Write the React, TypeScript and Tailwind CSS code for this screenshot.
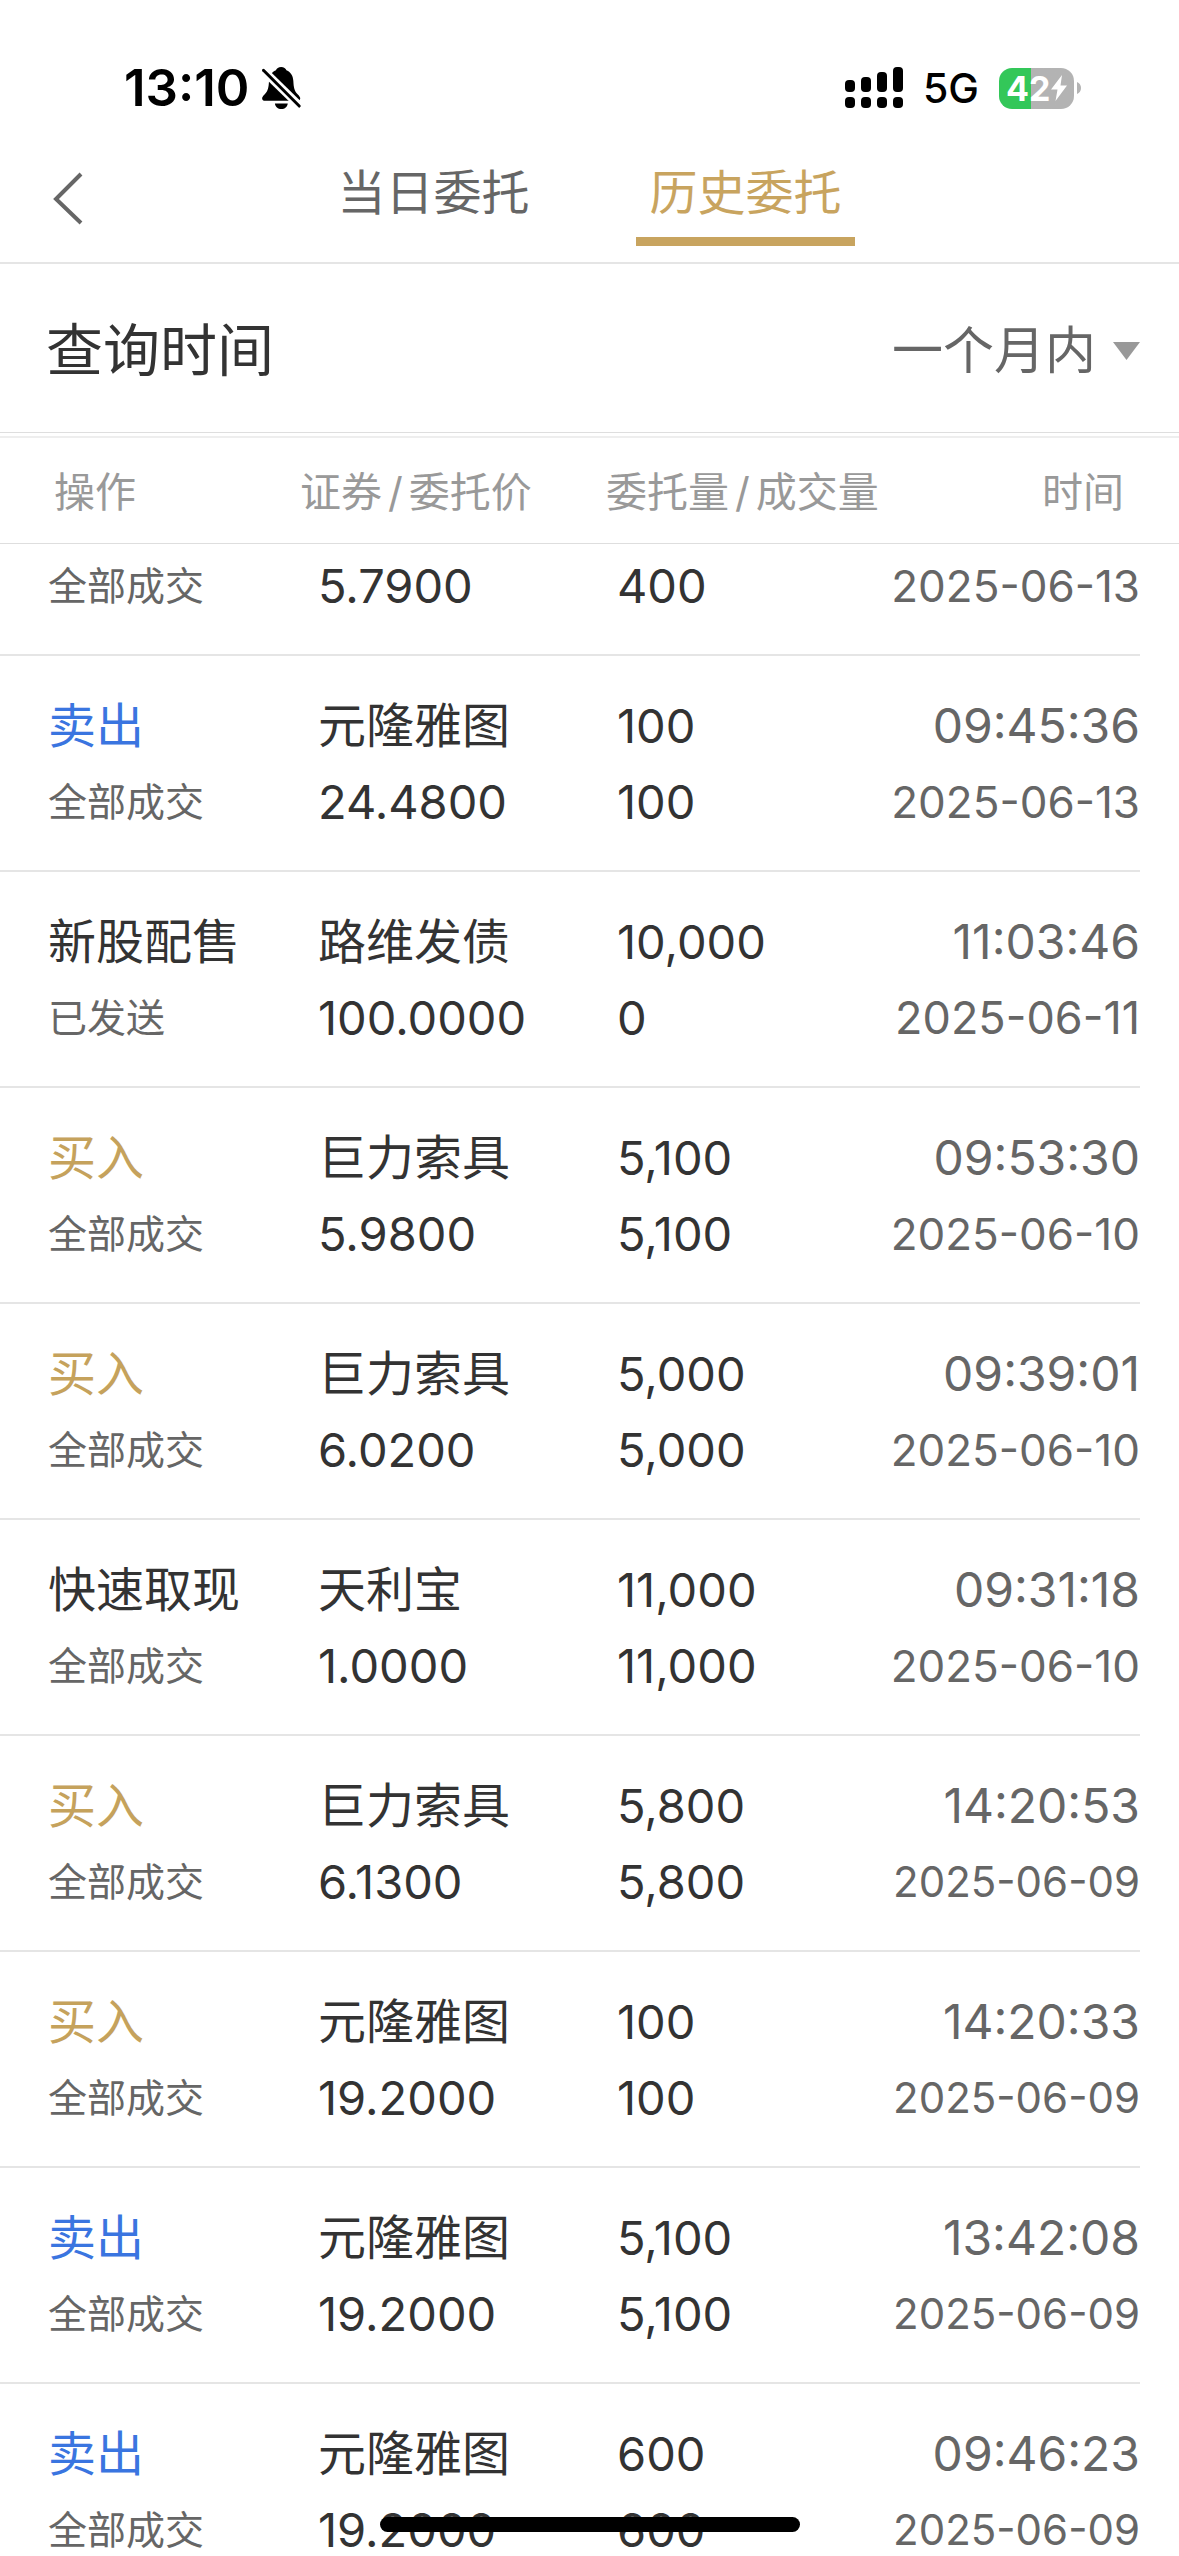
type Side = "buy" | "sell" | "other";

interface Order {
  side: Side;
  action?: string;
  status: string;
  name?: string;
  price: string;
  amount?: string;
  filled: string;
  time?: string;
  date: string;
}

const orders: Order[] = [
  { side: "other", status: "全部成交", price: "5.7900", filled: "400", date: "2025-06-13" },
  { side: "sell", action: "卖出", status: "全部成交", name: "元隆雅图", price: "24.4800", amount: "100", filled: "100", time: "09:45:36", date: "2025-06-13" },
  { side: "other", action: "新股配售", status: "已发送", name: "路维发债", price: "100.0000", amount: "10,000", filled: "0", time: "11:03:46", date: "2025-06-11" },
  { side: "buy", action: "买入", status: "全部成交", name: "巨力索具", price: "5.9800", amount: "5,100", filled: "5,100", time: "09:53:30", date: "2025-06-10" },
  { side: "buy", action: "买入", status: "全部成交", name: "巨力索具", price: "6.0200", amount: "5,000", filled: "5,000", time: "09:39:01", date: "2025-06-10" },
  { side: "other", action: "快速取现", status: "全部成交", name: "天利宝", price: "1.0000", amount: "11,000", filled: "11,000", time: "09:31:18", date: "2025-06-10" },
  { side: "buy", action: "买入", status: "全部成交", name: "巨力索具", price: "6.1300", amount: "5,800", filled: "5,800", time: "14:20:53", date: "2025-06-09" },
  { side: "buy", action: "买入", status: "全部成交", name: "元隆雅图", price: "19.2000", amount: "100", filled: "100", time: "14:20:33", date: "2025-06-09" },
  { side: "sell", action: "卖出", status: "全部成交", name: "元隆雅图", price: "19.2000", amount: "5,100", filled: "5,100", time: "13:42:08", date: "2025-06-09" },
  { side: "sell", action: "卖出", status: "全部成交", name: "元隆雅图", price: "19.2000", amount: "600", filled: "600", time: "09:46:23", date: "2025-06-09" },
];

const sideColor: Record<Side, string> = {
  buy: "text-[#c5a25c]",
  sell: "text-[#3a75e0]",
  other: "text-[#333333]",
};

// Dates fill a common width: the more narrow "1" digits, the larger the type.
const dateSizes = ["text-[42px]", "text-[44px]", "text-[45px]"];

function dateSize(date: string) {
  return dateSizes[date.split("1").length - 1] ?? "text-[42px]";
}

function BellOff() {
  return (
    <svg viewBox="66 48 124 134" className="h-[44px] w-[41px]" aria-label="静音" role="img">
      <path
        d="M127 51c-8 0-14 4-16 10c-14 6-20 17-21 32c-1 20-3 31-13 41c-6 6-8 9-8 13c0 5 4 7 9 7h98c5 0 9-2 9-7c0-4-2-7-8-13c-10-10-12-21-13-41c-1-15-7-26-21-32c-2-6-8-10-16-10z"
        fill="#000"
      />
      <path d="M108 162h39c-1 10-9 17-19.500 17s-18.500-7-19.500-17z" fill="#000" />
      <path d="M66 55L192 178" stroke="#fff" strokeWidth="25" />
      <path d="M73 61L182 170" stroke="#000" strokeWidth="9" strokeLinecap="round" />
    </svg>
  );
}

function Signal() {
  return (
    <svg viewBox="0 0 58 42" className="h-[42px] w-[58px]" aria-label="信号" role="img">
      <rect x="0" y="13" width="10" height="12" rx="4" />
      <rect x="16" y="10" width="10" height="15" rx="4" />
      <rect x="32" y="5" width="10" height="20" rx="4" />
      <rect x="48" y="0" width="10" height="25" rx="4" />
      <rect x="0" y="30" width="10" height="11" rx="4" />
      <rect x="16" y="30" width="10" height="11" rx="4" />
      <rect x="32" y="30" width="10" height="11" rx="4" />
      <rect x="48" y="30" width="10" height="11" rx="4" />
    </svg>
  );
}

function Battery() {
  return (
    <div className="flex items-center gap-[3px]">
      <div className="flex h-[41px] w-[75px] items-center overflow-hidden rounded-[13px] bg-linear-to-r from-[#33c759] from-43% to-[#b3b3b3] to-43% pl-[7px] text-white">
        <span className="text-[34px] leading-[41px] font-bold">42</span>
        <svg viewBox="0 0 16 26" className="ml-px h-[26px] w-[16px] shrink-0" aria-hidden="true">
          <path d="M11 0L0 14.500h6.500L4.500 26L16 10.500H9.500z" fill="#fff" />
        </svg>
      </div>
      <svg viewBox="0 0 4 12" className="h-[12px] w-[4px]" aria-hidden="true">
        <path d="M0 0c2.500 1 4 3 4 6s-1.500 5-4 6z" fill="#b3b3b3" />
      </svg>
    </div>
  );
}

function StatusBar() {
  return (
    <div className="flex h-[144px] shrink-0 items-center justify-between pt-8 pr-[98px] pl-[124px] text-black">
      <div className="flex items-center gap-3">
        <span className="text-[51px] leading-[60px] font-semibold">13:10</span>
        <BellOff />
      </div>
      <div className="flex items-center gap-5">
        <Signal />
        <span className="text-[41px] leading-[50px] font-medium">5G</span>
        <Battery />
      </div>
    </div>
  );
}

function Navigation() {
  const tab = "h-[102px] w-[219px] border-b-9 pt-1 text-[48px] leading-[89px]";
  return (
    <nav className="relative flex shrink-0 justify-center gap-[93px] border-b-2 border-[#e5e5e5] pb-4">
      <button type="button" aria-label="返回" className="absolute top-[26px] left-[50px]">
        <svg viewBox="0 0 36 56" className="h-[56px] w-[36px]" fill="none" stroke="#666" strokeWidth="4">
          <path d="M31 4L6 29L31 53" />
        </svg>
      </button>
      <button type="button" className={`${tab} border-transparent text-[#666666]`}>
        当日委托
      </button>
      <button type="button" aria-current="page" className={`${tab} border-[#c8a45f] text-[#c8a45f]`}>
        历史委托
      </button>
    </nav>
  );
}

function PeriodFilter() {
  return (
    <div className="flex h-[169px] shrink-0 items-center justify-between border-b border-[#dedede] pt-[6px] pr-[39px] pl-[46px]">
      <label htmlFor="period" className="text-[57px] leading-[80px] text-[#333333]">
        查询时间
      </label>
      <div className="flex items-center gap-4">
        <select id="period" defaultValue="month" className="appearance-none bg-transparent text-[51px] leading-[76px] text-[#666666]">
          <option value="month">一个月内</option>
        </select>
        <svg viewBox="0 0 27 18" className="h-[18px] w-[27px]" aria-hidden="true">
          <path d="M0 0H27L13.500 18z" fill="#999" />
        </svg>
      </div>
    </div>
  );
}

function OrderRow({ order }: { order: Order }) {
  const pad = order.action ? "pt-8" : "pt-1";
  const cell = `${pad} border-b-2 border-[#e5e5e5] pb-[30px] align-top whitespace-nowrap`;
  const label = "h-[76px] text-[48px] leading-[76px]";
  const figure = "h-[76px] text-[47px] leading-[76px]";
  return (
    <tr>
      <td className={`${cell} pl-12`}>
        {order.action && <div className={`${label} ${sideColor[order.side]}`}>{order.action}</div>}
        <div className="h-[76px] text-[39px] leading-[76px] text-[#666666]">{order.status}</div>
      </td>
      <td className={`${cell} pl-[18px] text-[#333333]`}>
        {order.name && <div className={label}>{order.name}</div>}
        <div className={figure}>{order.price}</div>
      </td>
      <td className={`${cell} pl-[11px] text-[#333333]`}>
        {order.amount && <div className={figure}>{order.amount}</div>}
        <div className={figure}>{order.filled}</div>
      </td>
      <td className={`${cell} text-right text-[#666666]`}>
        {order.time && <div className={label}>{order.time}</div>}
        <div className={`h-[76px] leading-[76px] ${dateSize(order.date)}`}>{order.date}</div>
      </td>
      <td />
    </tr>
  );
}

function OrderTable() {
  const head = "h-[106px] border-b border-[#dedede] px-0 pt-[3px] pb-0 font-normal whitespace-nowrap";
  return (
    <table className="w-full table-fixed border-separate border-spacing-0">
      <colgroup>
        <col className="w-[300px]" />
        <col className="w-[306px]" />
        <col />
        <col className="w-[260px]" />
        <col className="w-[39px]" />
      </colgroup>
      <thead className="text-[41px] leading-[60px] text-[#999999]">
        <tr>
          <th scope="col" className={`${head} text-left`}>
            <span className="ml-[54px]">操作</span>
          </th>
          <th scope="col" className={`${head} text-left`}>
            证券<span className="mx-[6px]">/</span>委托价
          </th>
          <th scope="col" className={`${head} text-left`}>
            委托量<span className="mx-[6px]">/</span>成交量
          </th>
          <th scope="col" className={`${head} text-right`}>
            <span className="mr-4">时间</span>
          </th>
          <td className="border-b border-[#dedede]" />
        </tr>
      </thead>
      <tbody>
        {orders.map((order, i) => (
          <OrderRow key={i} order={order} />
        ))}
      </tbody>
    </table>
  );
}

export default function App() {
  return (
    <div className="flex h-screen flex-col overflow-hidden bg-white font-[Inter,'Noto_Sans_CJK_SC',sans-serif]" lang="zh-CN">
      <StatusBar />
      <Navigation />
      <PeriodFilter />
      <main className="mt-[3px] min-h-0 flex-1 overflow-hidden border-t-2 border-[#eeeeee]">
        <OrderTable />
      </main>
      <div className="fixed bottom-6 left-1/2 h-[15px] w-[420px] -translate-x-1/2 rounded-full bg-black" />
    </div>
  );
}
